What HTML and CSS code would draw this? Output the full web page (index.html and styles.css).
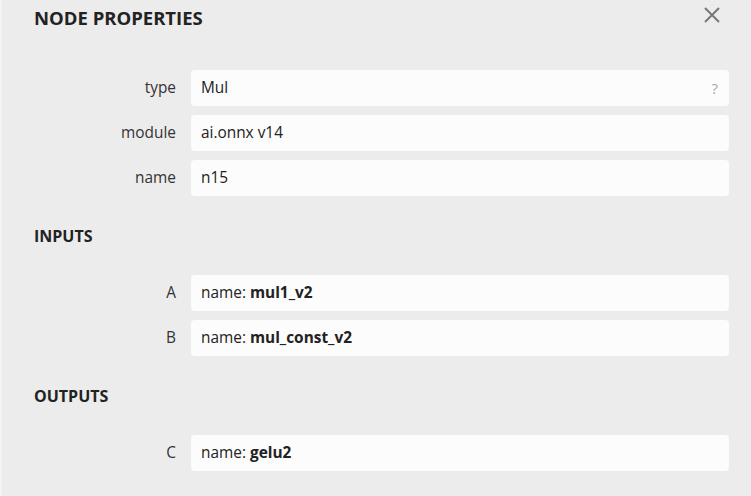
FILE: index.html
```html
<!DOCTYPE html>
<html>
<head>
<meta charset="utf-8">
<link rel="stylesheet" href="styles.css">
</head>
<body>
<div class="sidebar">
  <div class="header">
    <div class="title">NODE PROPERTIES</div>
    <svg class="close" width="16" height="16" viewBox="0 0 16 16"><path d="M1 1 L15 15 M15 1 L1 15" stroke="#777" stroke-width="2" fill="none"/></svg>
  </div>
  <div class="grid props">
    <div class="label">type</div>
    <div class="value"><span>Mul</span><span class="help">?</span></div>
    <div class="label">module</div>
    <div class="value"><span>ai.onnx v14</span></div>
    <div class="label">name</div>
    <div class="value"><span>n15</span></div>
  </div>
  <div class="section-title">INPUTS</div>
  <div class="grid">
    <div class="label">A</div>
    <div class="value"><span>name: <b>mul1_v2</b></span></div>
    <div class="label">B</div>
    <div class="value"><span>name: <b>mul_const_v2</b></span></div>
  </div>
  <div class="section-title">OUTPUTS</div>
  <div class="grid">
    <div class="label">C</div>
    <div class="value"><span>name: <b>gelu2</b></span></div>
  </div>
</div>
</body>
</html>
```
FILE: styles.css
```css
html, body {
  margin: 0;
  padding: 0;
  background: #ececec;
}
body {
  font-family: "Open Sans", "Liberation Sans", sans-serif;
  color: #222;
}
.sidebar {
  border-left: 2px solid #f4f4f4;
  min-height: 496px;
  box-sizing: border-box;
  padding-right: 22px;
}
.header {
  display: flex;
  justify-content: space-between;
  align-items: flex-start;
  height: 36px;
  padding-left: 32px;
  padding-right: 9px;
}
.title {
  font-weight: bold;
  font-size: 18.5px;
  line-height: 35px;
  color: #222;
}
.close {
  margin-top: 7px;
}
.grid {
  display: grid;
  grid-template-columns: 174px 1fr;
  column-gap: 15px;
  row-gap: 9px;
}
.props {
  margin-top: 34px;
}
.label {
  text-align: right;
  font-size: 15.4px;
  line-height: 36px;
  color: #333;
}
.value {
  background: #fcfcfc;
  border-radius: 4px;
  height: 36px;
  line-height: 36px;
  font-size: 15.4px;
  padding: 0 11px 0 10px;
  display: flex;
  justify-content: space-between;
  color: #222;
}
.value b {
  font-weight: bold;
}
.help {
  color: #aaa;
  font-size: 15px;
}
.section-title {
  font-weight: bold;
  font-size: 16px;
  line-height: 24px;
  padding-left: 32px;
  margin-top: 28px;
  margin-bottom: 27px;
  color: #222;
}
```
